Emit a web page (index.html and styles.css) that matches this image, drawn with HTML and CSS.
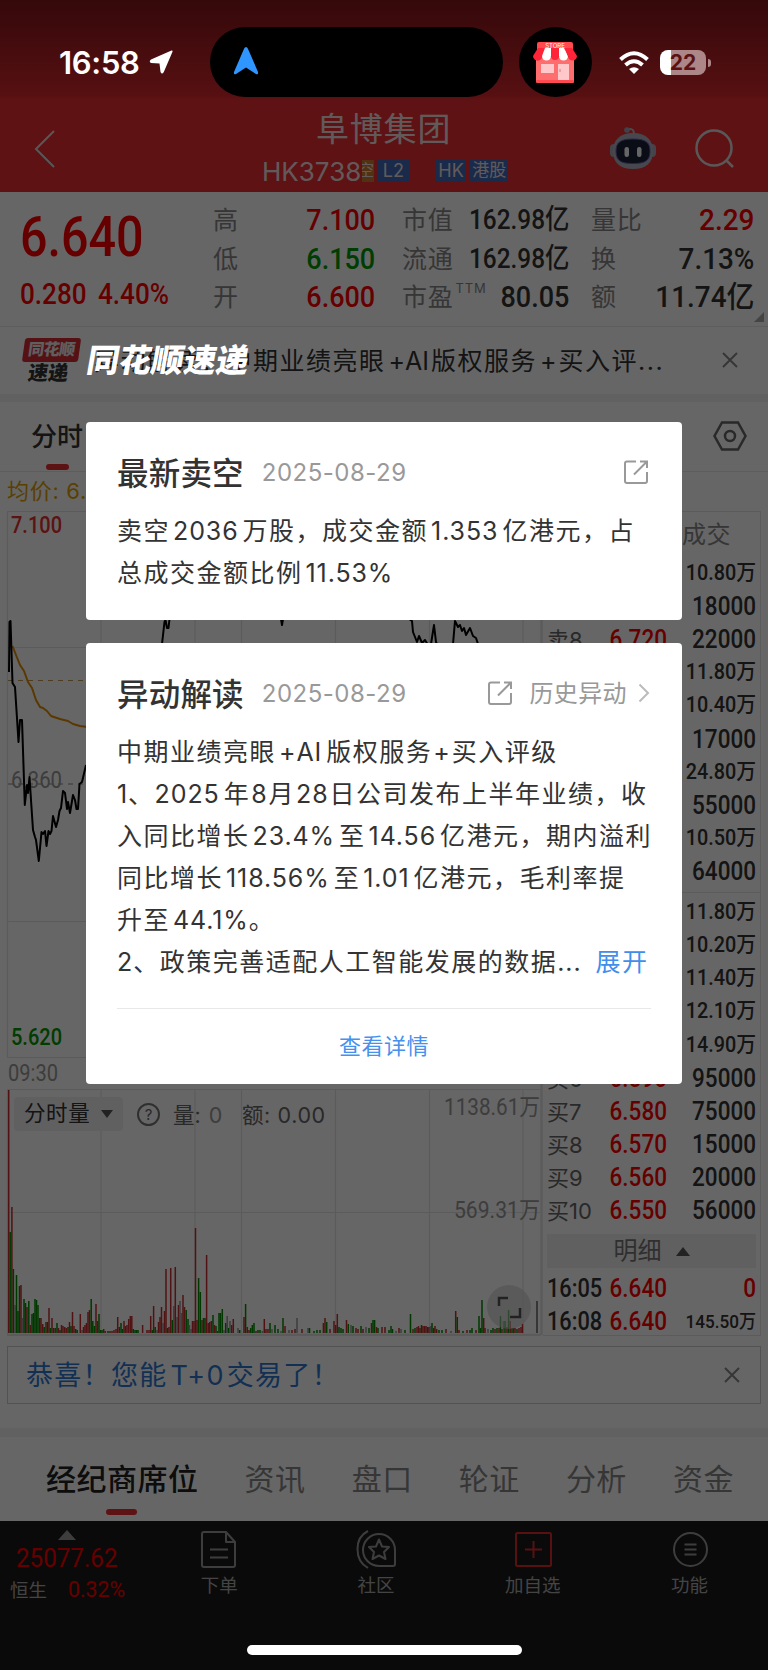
FILE: index.html
```html
<!DOCTYPE html>
<html lang="zh-CN">
<head>
  <meta charset="UTF-8" />
  <meta name="viewport" content="width=device-width, initial-scale=1.0" />
  <title>阜博集团 HK3738</title>
  <link rel="stylesheet" href="styles.css">
</head>
<body>
  <div class="page">
    <!-- Header -->
    <header class="header">
      <svg class="back" width="22" height="40" viewBox="0 0 22 40"><path d="M20 2 L2 20 L20 38"/></svg>
      <div class="stock">
        <h1>阜博集团</h1>
        <div class="code">
          <span class="code-no">HK3738</span>
          <span class="tag orange">空</span>
          <span class="tag">L2</span>
          <span class="tag hk">HK</span>
          <span class="tag wide">港股</span>
        </div>
      </div>
      <svg class="robot" width="48" height="44" viewBox="0 0 48 44">
        <path d="M25 8 C25 3 22 2.500 19 3.500" fill="none" stroke="#b8bcc8" stroke-width="2"/>
        <circle cx="18" cy="4" r="2.800" fill="#9fa6b8"/>
        <rect x="1" y="18" width="8" height="13" rx="4" fill="#a8acba"/>
        <rect x="39" y="18" width="8" height="13" rx="4" fill="#a8acba"/>
        <path d="M24 7 C37 7 44 14 44 25 C44 37 37 43 24 43 C11 43 4 37 4 25 C4 14 11 7 24 7Z" fill="#b0b3c0"/>
        <path d="M24 13 C36 13 41 16 41 25 C41 35 36 37.500 24 37.500 C12 37.500 7 35 7 25 C7 16 12 13 24 13Z" fill="#1b2238" stroke="#6d58b0" stroke-width="1"/>
        <rect x="15.500" y="21" width="4.500" height="10" rx="2.200" fill="#fff"/>
        <rect x="28" y="21" width="4.500" height="10" rx="2.200" fill="#fff"/>
      </svg>
      <svg class="search" width="42" height="42" viewBox="0 0 42 42"><circle cx="20" cy="20" r="17.500"/><path d="M32 32 L39 39"/></svg>
    </header>

    <!-- Quote -->
    <section class="quote">
      <div class="last">
        <div class="price din">6.640</div>
        <div class="change"><span class="din">0.280</span><span class="din">4.40%</span></div>
      </div>
      <dl class="figures col-a">
        <dt>高</dt><dd class="din up">7.100</dd>
        <dt>低</dt><dd class="din down">6.150</dd>
        <dt>开</dt><dd class="din up">6.600</dd>
      </dl>
      <dl class="figures col-b">
        <dt>市值</dt><dd class="din small">162.98亿</dd>
        <dt>流通</dt><dd class="din small">162.98亿</dd>
        <dt>市盈<sup>TTM</sup></dt><dd class="din">80.05</dd>
      </dl>
      <dl class="figures col-c">
        <dt>量比</dt><dd class="din up">2.29</dd>
        <dt>换</dt><dd class="din">7.13%</dd>
        <dt>额</dt><dd class="din">11.74亿</dd>
      </dl>
      <i class="corner"></i>
    </section>

    <!-- News strip -->
    <section class="strip">
      <div class="badge"><b>同花顺</b><em>速递</em></div>
      <p>异动解读：中期业绩亮眼<span class="plus">+AI</span>版权服务<span class="plus">+</span>买入评<span class="dots">...</span></p>
      <svg class="close" width="16" height="16" viewBox="0 0 16 16"><path d="M1 1 L15 15 M15 1 L1 15"/></svg>
    </section>

    <nav class="period">
      <span class="active">分时</span>
      <svg width="34" height="30" viewBox="0 0 34 30"><path d="M9 1.500 H25 L32.500 15 L25 28.500 H9 L1.500 15Z"/><circle cx="17" cy="15" r="5"/></svg>
    </nav>

    <!-- Charts + order book -->
    <section class="board">
      <div class="charts">
        <div class="avg">均价: 6.522</div>
        <svg id="chart" width="543" height="836" viewBox="0 500 543 836">
          <g class="grid">
            <path d="M7.500 1057.500 V511.500 H541 M7 647.500 H541 M7 921.500 H541 M7 1057.500 H541"/>
            <path d="M101 511 V1057 M195 511 V1057 M241.500 511 V1057 M335.500 511 V1057 M429.500 511 V1057 M523 511 V1057"/>
            <path d="M7.500 1334 V1089.500 H541 M7 1212.500 H541"/>
            <path d="M101 1089 V1335 M195 1089 V1335 M241.500 1089 V1335 M335.500 1089 V1335 M429.500 1089 V1335 M523 1089 V1335"/>
          </g>
          <path class="frame" d="M541.500 511 V1335 M7 1335 H541"/>
          <path class="dash gold" d="M8 680.500 H541"/>
          <path class="dash mid" d="M8 784 H541"/>
          <polyline class="avg-line" points="12.500,646 16,655 20,665 24,671 28,682 32,688 36,700 40,707 43,708 47,711 51,716 60,719 68,721 73,724 80,726 88,727"/>
          <text class="axis mid-text" x="11" y="788" textLength="51" lengthAdjust="spacingAndGlyphs">6.360</text>
          <polyline class="price-line" points="9,672 9.500,622 10.500,621 12.500,683 15,687 18.500,742 20,720 22,720 24.800,805 27,785 28,793 29.500,777 31,800 33,830 35,837 36,840 38.800,861 41.500,832 43,834 45,831 46.500,846 48.500,831 50,834 51.500,831 53,816 56,827 58,820 59.500,811 61,808 63,791 65,793 67,809 68,802 70,813 73,795 75,800 76.500,809 78,809 79.500,784 82,782 86,765"/>
          <polyline class="price-line" points="162,644 164.500,622 165.500,620 167,628 168.500,628 169.500,619"/>
          <path class="price-line" d="M281 619 L282 625 L283 619"/>
          <polyline class="price-line" points="409,619 412,621 413,632 417,642 419,636 422,643 425,640 428,645 431,644 434,625 436,642 438,646 453,644 455,621 458,627 460,625 462,631 464,628 466,635 470,628 473,636 476,638 478,644"/>
          <text class="axis up" x="11" y="533" textLength="51" lengthAdjust="spacingAndGlyphs">7.100</text>
          <text class="axis down" x="11" y="1045" textLength="51" lengthAdjust="spacingAndGlyphs">5.620</text>
          <text class="axis time" x="8" y="1081" textLength="50" lengthAdjust="spacingAndGlyphs">09:30</text>
          <text class="axis vol" x="540" y="1115" text-anchor="end" textLength="96" lengthAdjust="spacingAndGlyphs">1138.61万</text>
          <text class="axis vol" x="540" y="1218" text-anchor="end" textLength="86" lengthAdjust="spacingAndGlyphs">569.31万</text>
          <g id="volume"></g>
          <rect x="536" y="1301" width="2" height="32" fill="#888"/>
          <circle cx="509" cy="1307" r="22" fill="#cfcfcf" fill-opacity=".6"/>
          <path class="expand" d="M499 1306 V1298 H508 M520 1308 V1317 H510"/>
        </svg>
        <div class="vol-legend">
          <span class="pill">分时量<i></i></span>
          <span class="help">?</span>
          <span class="v">量: <s>0</s></span>
          <span class="a">额: <b>0.00</b></span>
        </div>
      </div>

      <div class="book">
        <div class="book-head">成交</div>
        <div class="rows" id="asks"></div>
        <div class="rows bids" id="bids"></div>
        <div class="detail">明细<i></i></div>
        <div class="trade"><span class="din">16:05</span><span class="din up">6.640</span><span class="din up">0</span></div>
        <div class="trade"><span class="din">16:08</span><span class="din up">6.640</span><span class="din wan">145.50万</span></div>
      </div>
    </section>

    <div class="promo">
      <span>恭喜！您能<i>T+0</i>交易了！</span>
      <svg class="close" width="16" height="16" viewBox="0 0 16 16"><path d="M1 1 L15 15 M15 1 L1 15"/></svg>
    </div>

    <nav class="tabs">
      <span class="active">经纪商席位</span>
      <span>资讯</span><span>盘口</span><span>轮证</span><span>分析</span><span>资金</span>
    </nav>

    <!-- Bottom bar -->
    <footer class="bottom">
      <div class="index">
        <i></i>
        <div class="din up">25077.62</div>
        <p><span>恒生</span><span class="din up">0.32%</span></p>
      </div>
      <div class="item">
        <svg width="40" height="40" viewBox="0 0 40 40"><path d="M5 3 H27 L36 13 V36 Q36 38 34 38 H5 Q3 38 3 36 V5 Q3 3 5 3Z M27 3 V13 H36 M11 20.500 H29 M11 28.500 H29"/></svg>
        下单
      </div>
      <div class="item">
        <svg width="40" height="40" viewBox="0 0 40 40"><path d="M12 2 C-2 9 -2 31 12 39 M39 21 A16 16 0 1 0 23 37 H37 Q39 37 39 35Z"/><path d="M23 10.500 L26 17.500 L33 18 L28 23 L29.500 30 L23 26.500 L16.500 30 L18 23 L13 18 L20 17.500Z"/></svg>
        社区
      </div>
      <div class="item">
        <svg class="red" width="40" height="40" viewBox="0 0 40 40"><rect x="3" y="4" width="35" height="33" rx="1.500"/><path d="M20.500 12 V29 M12 20.500 H29"/></svg>
        加自选
      </div>
      <div class="item">
        <svg width="40" height="40" viewBox="0 0 40 40"><circle cx="20.500" cy="20.500" r="16.500"/><path d="M14.500 15.500 H26.500 M14.500 20.500 H26.500 M14.500 25.500 H26.500"/></svg>
        功能
      </div>
    </footer>
  </div>

  <!-- Popup -->
  <div class="mask">
    <h2 class="mask-title">同花顺速递</h2>
    <article class="card">
      <div class="card-head">
        <h3>最新卖空</h3><time>2025-08-29</time>
        <svg class="share" width="26" height="26" viewBox="0 0 26 26"><path d="M13 2.500 H4 Q2 2.500 2 4.500 V22 Q2 24 4 24 H22 Q24 24 24 22 V13 M17 2.500 H24 V9 M24 2.500 L11 15.500"/></svg>
      </div>
      <div class="card-body">
        <p>卖空<i>2036</i>万股，成交金额<i>1.353</i>亿港元，占</p>
        <p>总成交金额比例<i>11.53%</i></p>
      </div>
    </article>
    <article class="card second">
      <div class="card-head">
        <h3>异动解读</h3><time>2025-08-29</time>
        <svg class="share" width="26" height="26" viewBox="0 0 26 26"><path d="M13 2.500 H4 Q2 2.500 2 4.500 V22 Q2 24 4 24 H22 Q24 24 24 22 V13 M17 2.500 H24 V9 M24 2.500 L11 15.500"/></svg>
        <span class="history">历史异动</span>
        <svg class="arrow" width="12" height="20" viewBox="0 0 12 20"><path d="M1.500 1.500 L10 10 L1.500 18.500"/></svg>
      </div>
      <div class="card-body">
        <p>中期业绩亮眼<i>+AI</i>版权服务<i class="tight">+</i>买入评级</p>
        <p><i class="first">1</i>、<i class="flush">2025</i>年<i class="tight">8</i>月<i class="tight">28</i>日公司发布上半年业绩，收</p>
        <p>入同比增长<i>23.4%</i>至<i>14.56</i>亿港元，期内溢利</p>
        <p>同比增长<i>118.56%</i>至<i>1.01</i>亿港元，毛利率提</p>
        <p>升至<i class="end">44.1%</i>。</p>
        <p><i class="first">2</i>、政策完善适配人工智能发展的数据<i class="flush">...</i><a>展开</a></p>
      </div>
      <div class="more">查看详情</div>
    </article>
  </div>

  <!-- System status bar -->
  <div class="status">
    <span class="clock">16:58</span>
    <svg class="loc" width="24" height="24" viewBox="0 0 24 24"><path d="M22.500 .5 L2 9.500 Q-.5 11.500 2 13 L10.500 13.500 L11.500 22 Q13 25 14.800 22 L23.500 1.800 Q23.800 0 22.500 .5Z" fill="#fff"/></svg>
    <div class="island"><svg width="26" height="28" viewBox="0 0 26 28"><path d="M13 0 Q14.500 0 15.500 3 L25 25 Q25.500 28 23 27 L13 20.500 L3 27 Q.500 28 1 25 L10.500 3 Q11.500 0 13 0Z" fill="#3096ff"/></svg></div>
    <div class="store">
      <svg width="46" height="44" viewBox="0 0 46 44">
        <rect x="5" y="1" width="36" height="10" rx="2" fill="#ff4b50"/>
        <text x="23" y="7" text-anchor="middle">STORE</text>
        <rect x="4" y="16" width="38" height="25" fill="#ff6e6e"/>
        <rect x="4" y="39" width="38" height="3" rx="1" fill="#ff4b50"/>
        <path d="M6 7 H15 L10.500 15 A4.500 4.500 0 0 1 1 15Z" fill="#ff2438"/>
        <path d="M13 7 H19 V15 A4.500 4.500 0 0 1 10 15Z" fill="#fff"/>
        <path d="M19 7 H27 V15 A4 4 0 0 1 19 15Z" fill="#ff2438"/>
        <path d="M27 7 H33 L36 15 A4.500 4.500 0 0 1 27 15Z" fill="#fff"/>
        <path d="M32 7 H40 L45 15 A4.500 4.500 0 0 1 36 15Z" fill="#ff2438"/>
        <rect x="9" y="23" width="13" height="9" fill="#ffc9cb"/>
        <rect x="26" y="23" width="11" height="16" fill="#ffc9cb"/>
        <path d="M28 28 V31" stroke="#ff6e6e"/>
      </svg>
    </div>
    <svg class="wifi" width="30" height="23" viewBox="0 0 30 23" fill="none" stroke="#fff" stroke-width="4">
      <path d="M1.500 8.500 Q15 -4 28.500 8.500 M6.500 14 Q15 6.500 23.500 14"/><path d="M10 18 Q15 14.500 20 18 L15 23Z" fill="#fff" stroke="none"/>
    </svg>
    <div class="battery"><b>22</b></div>
  </div>
  <div class="home-bar"></div>

  <script>
    const sizes = {
      asks: ["10.80万", "18000", "22000", "11.80万", "10.40万", "17000", "24.80万", "55000", "10.50万", "64000"],
      bids: ["11.80万", "10.20万", "11.40万", "12.10万", "14.90万", "95000", "75000", "15000", "20000", "56000"]
    };

    function fillRows(id, name, level, price) {
      document.getElementById(id).innerHTML = sizes[id].map((size, i) => {
        const wan = size.endsWith("万") ? " wan" : "";
        return `<div class="row"><span>${name}${level(i)}</span>` +
          `<span class="din up">${price(i).toFixed(3)}</span>` +
          `<span class="din${wan}">${size}</span></div>`;
      }).join("");
    }
    fillRows("asks", "卖", i => 10 - i, i => 6.74 - i * 0.01);
    fillRows("bids", "买", i => i + 1, i => 6.64 - i * 0.01);

    // x, height, r = up / g = down / n = flat
    const bars = `8.7 243 r,10.2 101 g,11.9 126 r,13.4 64 g,15 28 n,16.500 58 g,18 22 g,19.500 47 g,21 48 r,22.500 15 n,24 34 g,25.500 30 g,27 26 r,28.800 32 g,30.300 8 r,32 19 g,33.500 20 g,35 34 g,36.500 33 g,38 28 g,39.700 15 g,41 15 r,42.700 9 r,44.200 6 g,46 11 r,47.500 11 g,49 25 r,50.500 5 g,52 15 r,53.700 5 g,55.300 5 r,57 10 g,58.500 5 r,60 3 g,61.500 8 r,63 7 r,64.700 6 r,66.200 5 r,68 6 g,69.500 11 r,71 7 g,72.500 21 r,74 7 r,75.700 4 g,77.200 3 g,80.300 19 r,82 3 n,83.500 6 r,85 8 r,86.500 10 r,88 21 r,89.500 23 r,91.200 34 g,92.800 12 g,94.400 7 g,96 29 r,97.500 12 r,99 19 g,100.500 3 g,102 3 g,103.700 4 r,105.200 2 r,108 2 g,110 2 r,112 2 r,114 3 r,116 4 r,117.700 16 r,119.300 6 r,121 10 g,122.500 4 g,124 12 r,125.500 7 r,127 8 r,128.700 14 r,130.300 17 r,131.800 17 r,133.300 4 g,135 3 g,136.500 3 g,138 3 g,142.600 8 r,147 3 r,149 3 r,150.700 17 r,152.300 3 g,153.600 27 r,155.200 6 g,157 3 n,158.500 11 r,160 16 r,161.500 26 r,163 10 n,164.500 22 r,166 64 r,167.500 5 g,169 6 r,170.700 65 r,172.300 13 g,173.800 27 n,175.300 66 r,177 16 n,178.500 28 r,180 32 n,181.500 20 n,183 38 r,184.500 26 r,186.200 23 g,188 14 g,189.500 8 n,191 4 n,192.500 12 r,194 12 r,195.500 105 r,197 13 r,198.600 55 g,200.300 41 g,202 13 r,203.500 15 g,205 15 g,206.600 78 r,208.200 10 r,209.700 11 r,211.300 12 r,213 18 g,214.500 8 r,216 7 g,217.500 2 r,219 20 g,220.500 20 g,222.300 24 g,224 3 n,225.700 10 g,227.200 17 n,228.700 5 g,230 12 n,231.700 8 r,233.300 14 r,238 5 n,239.700 3 g,244 16 r,245.600 29 g,247.300 6 r,249 3 r,250.700 5 g,252.300 8 g,254 10 g,256 2 r,258 3 g,260 3 g,262.300 2 n,264.300 14 r,266 4 r,268 4 r,270 10 g,272 4 n,275 8 g,278 4 g,281 2 n,283 15 g,285 7 r,289 3 n,292 3 r,295 4 r,297 15 n,302 4 r,308 5 n,309.500 5 g,314 2 g,317 3 g,320 3 g,323.400 10 r,325 15 r,326.700 11 g,330 4 r,334 12 r,335.700 8 r,337.300 19 r,339 6 g,341 5 g,343 4 g,346.500 13 r,348.300 9 g,351 8 n,353 7 g,356 5 r,358 4 r,361 7 g,363 4 r,366 6 n,369 5 g,371.500 10 r,373 13 g,374.600 13 g,376.500 6 r,378 5 g,382 6 r,385 6 r,389 3 g,391 7 g,392.500 4 g,396 2 n,399 5 r,401 4 n,405 3 g,410.500 19 g,413 4 r,415 5 g,417 6 r,418.500 7 r,420 5 r,421.500 8 g,423 7 r,424.600 7 r,426 7 r,427.600 6 g,429 6 r,430.700 7 n,432 10 g,433.700 5 g,435 7 r,436.700 4 r,439 3 g,442 3 g,446 4 r,451 2 n,455.700 22 r,457.300 16 g,459 3 r,463 2 g,467 3 r,470 3 g,472 5 g,476 3 r,479 17 g,480.600 5 g,482 33 g,483.700 15 r,485 5 r,488 4 n,491 3 g,493 5 g,495 4 r,497 5 g,499 5 r,500.500 17 g,502 4 r,503.500 12 n,505 12 g,507 6 r,508.600 23 g,510.200 12 r,512 5 g,513.600 5 r,515 5 r,517 4 g,519 5 r,521 6 r,522.500 9 r`;
    const colors = { r: "#c92f2f", g: "#008c00", n: "#999" };
    document.getElementById("volume").innerHTML = bars.split(",").map(b => {
      const [x, h, c] = b.split(" ");
      return `<rect x="${x - 0.75}" y="${1333 - h}" width="1.500" height="${h}" fill="${colors[c]}"/>`;
    }).join("");
  </script>
</body>
</html>
```
FILE: styles.css
```css
* {
  box-sizing: border-box;
  margin: 0;
  padding: 0;
}
body {
  position: relative;
  width: 768px;
  height: 1670px;
  overflow: hidden;
  background: #fff;
  color: #333;
  font-family: Inter, "Noto Sans CJK SC", sans-serif;
}
i, em {
  font-style: normal;
}
.page {
  height: 1670px;
  display: flex;
  flex-direction: column;
}
.din {
  display: inline-block;
  font-family: Roboto, "Noto Sans CJK SC", sans-serif;
  font-weight: 500;
  white-space: nowrap;
  transform: scaleX(.9);
  transform-origin: right center;
}
.up { color: #ff0000; fill: #e63030; }
.down { color: #009900; fill: #009900; }

/* Header */
.header {
  height: 192px;
  flex: none;
  padding: 108px 32px 0 34px;
  display: flex;
  align-items: flex-start;
  background: linear-gradient(#84161b 0, #d8282d 95px, #eb2d32 100px);
}
.back {
  margin-top: 21px;
}
.back path, .search circle, .search path {
  fill: none;
  stroke: #ddd;
  stroke-width: 2;
}
.stock {
  margin-left: 206px;
  width: 250px;
  color: #f5f5f5;
}
.stock h1 {
  height: 43px;
  padding-left: 54px;
  font-size: 33px;
  line-height: 43px;
  font-weight: 400;
  letter-spacing: .8px;
  opacity: .9;
}
.code {
  display: flex;
  align-items: center;
  height: 40px;
  opacity: .9;
}
.code-no {
  width: 101px;
  font-size: 26px;
  letter-spacing: 0;
}
.tag {
  height: 22px;
  width: 31px;
  margin-right: 4px;
  background: #2e70c8;
  font-size: 18px;
  line-height: 21px;
  text-align: center;
  white-space: nowrap;
  overflow: hidden;
}
.tag.orange {
  width: 12px;
  background: #c8852e;
  direction: rtl;
  font-size: 16px;
}
.tag.hk { margin-left: 23px; }
.tag.wide { width: 38px; font-size: 17px; }
.robot {
  margin: 18px 0 0 97px;
}
.search {
  margin: 20px 0 0 auto;
}
.search circle, .search path {
  stroke-width: 2.5;
}

/* Quote */
.quote {
  position: relative;
  height: 135px;
  flex: none;
  display: flex;
  border-bottom: 1px solid #e8e8e8;
}
.last {
  width: 214px;
  padding: 15px 0 0 20px;
  color: #ff0000;
}
.last .din {
  transform-origin: left center;
}
.price {
  font-size: 56px;
  line-height: 60px;
  transform: scaleX(.865) !important;
}
.change {
  padding-top: 8px;
  display: flex;
  font-size: 29px;
  line-height: 38px;
}
.change .din {
  width: 78px;
  transform: scaleX(.9);
}
.figures {
  display: grid;
  grid-template-columns: auto 1fr;
  grid-auto-rows: 38.500px;
  padding-top: 9px;
}
.figures dt {
  font-size: 25px;
  line-height: 38px;
  color: #888;
  letter-spacing: .8px;
  white-space: nowrap;
}
.figures dd {
  text-align: right;
  font-size: 30px;
  line-height: 38px;
}
.figures dd.small {
  font-size: 28px;
  transform: scaleX(.87);
}
.figures sup {
  position: absolute;
  font-size: 13px;
  line-height: 14px;
  margin: 3px 0 0 2px;
}
.col-a { width: 162px; margin-left: -1px; }
.col-b { width: 159px; margin-left: 27px; }
.col-c { width: 163px; margin-left: 30px; }
.col-c .din { transform: scaleX(.93); }
.corner {
  position: absolute;
  right: 4px;
  bottom: 4px;
  border: 5px solid transparent;
  border-right-color: #aaa;
  border-bottom-color: #aaa;
}

/* News strip */
.strip {
  height: 67px;
  flex: none;
  padding: 0 30px 0 24px;
  display: flex;
  align-items: center;
}
.badge {
  width: 56px;
  height: 46px;
  transform: skewX(-8deg);
  margin-left: -2px;
  text-align: center;
}
.badge b {
  display: block;
  height: 24px;
  border-radius: 3px;
  background: #d82c35;
  color: #eee;
  font-size: 16px;
  font-weight: 900;
  line-height: 23px;
  letter-spacing: -.5px;
}
.badge em {
  display: block;
  font-size: 20px;
  font-weight: 900;
  line-height: 23px;
}
.strip p {
  margin: -4px 0 0 16px;
  font-size: 25px;
  letter-spacing: 1.5px;
  white-space: nowrap;
}
.plus {
  margin: 0 2px 0 3px;
  letter-spacing: 0;
}
.strip .close {
  margin-top: -1px;
}
.close {
  margin-left: auto;
}
.close path {
  stroke: #888;
  stroke-width: 2;
}

/* Period tabs */
.period {
  height: 78px;
  flex: none;
  border-top: 8px solid #f2f2f2;
  border-bottom: 1px solid #e8e8e8;
  padding: 0 21px 0 31px;
  display: flex;
  justify-content: space-between;
  align-items: flex-start;
}
.period svg {
  margin-top: 19px;
}
.period svg * {
  fill: none;
  stroke: #666;
  stroke-width: 2.5;
}
.period .active {
  position: relative;
  height: 68px;
  font-size: 26px;
  font-weight: 500;
  line-height: 70px;
}
.active::after {
  content: "";
  position: absolute;
  left: 50%;
  bottom: 0;
  width: 23px;
  height: 6px;
  margin-left: -11px;
  border-radius: 3px;
  background: #e93030;
}

/* Charts */
.board {
  height: 864px;
  flex: none;
  display: flex;
}
.charts {
  position: relative;
  width: 543px;
}
.avg {
  height: 28px;
  padding-left: 7px;
  font-size: 22px;
  line-height: 39px;
  letter-spacing: .7px;
  color: #e0a000;
}
#chart {
  display: block;
}
.grid path, .frame, .dash {
  fill: none;
  stroke: #e4e4e4;
  stroke-width: 1.2;
}
.frame {
  stroke-width: 2.5;
}
.dash {
  stroke: #c49a52;
  stroke-dasharray: 5 5;
}
.dash.mid {
  stroke: #888;
}
.avg-line, .price-line {
  fill: none;
  stroke: #000;
  stroke-width: 2;
  stroke-linejoin: round;
}
.avg-line {
  stroke: #e08c00;
}
.axis {
  font-family: Roboto, "Noto Sans CJK SC", sans-serif;
  font-size: 23px;
  font-weight: 500;
}
.mid-text, .time, .vol {
  fill: #999;
  font-weight: 400;
}
.expand {
  fill: none;
  stroke: #555;
  stroke-width: 2.5;
}
.vol-legend {
  position: absolute;
  left: 14px;
  top: 625px;
  display: flex;
  align-items: center;
  height: 34px;
  font-size: 21.500px;
  color: #666;
  white-space: nowrap;
}
.pill {
  width: 109px;
  height: 34px;
  padding-left: 10px;
  border-radius: 4px;
  background: #f1f1f1;
  color: #333;
  line-height: 33px;
  letter-spacing: .6px;
}
.pill i, .detail i {
  display: inline-block;
  margin-left: 11px;
  vertical-align: 3px;
  border: 6px solid transparent;
  border-top: 8px solid #555;
  border-bottom: 0;
}
.help {
  width: 23px;
  height: 23px;
  margin-left: 14px;
  border: 2px solid #777;
  border-radius: 50%;
  font-size: 15px;
  line-height: 19px;
  text-align: center;
}
.v { margin: -2px 0 0 13px; width: 69px; }
.v s { text-decoration: none; color: #999; margin-left: 2px; }
.a { margin-top: -2px; letter-spacing: .6px; }
.a b { font-weight: 400; }

/* Order book */
.book {
  width: 218px;
  height: 825px;
  margin-top: 39px;
  padding: 0 4px;
  border: solid #e4e4e4;
  border-width: 1px 1px 1px 0;
  flex: none;
}
.book-head {
  height: 44px;
  padding-right: 25px;
  text-align: right;
  font-size: 24px;
  line-height: 45px;
  letter-spacing: .5px;
  color: #888;
}
.row, .trade {
  display: grid;
  grid-template-columns: 54px 66px 89px;
  height: 33.120px;
  line-height: 36px;
  font-size: 25px;
  text-align: right;
  white-space: nowrap;
}
.row span:first-child {
  text-align: left;
  font-size: 22px;
  line-height: 37px;
  color: #666;
}
.row .wan {
  font-size: 22px;
  line-height: 33px;
}
.bids {
  margin: 5px -4px 0;
  padding: 2px 4px 0;
  border-top: 1px solid #e4e4e4;
}
.detail {
  height: 34px;
  margin: 8px 0 3px;
  background: #f0f0f0;
  color: #777;
  font-size: 24px;
  line-height: 33px;
  text-align: center;
}
.detail i {
  margin-left: 14px;
  border: 7px solid transparent;
  border-top: 0;
  border-bottom: 9px solid #555;
}
.trade {
  line-height: 35px;
}
.trade span:first-child {
  transform: scaleX(.87);
  transform-origin: left center;
  text-align: left;
}
.trade .wan {
  font-size: 19px;
}

/* Promo */
.promo {
  height: 58px;
  flex: none;
  margin: 10px 7px 24px;
  padding: 0 20px 0 18px;
  border: 1px solid #ccc;
  display: flex;
  align-items: center;
  color: #2f78d2;
  font-size: 27px;
  letter-spacing: 1.3px;
}
.promo span {
  margin-top: -3px;
}
.promo i {
  margin: 0 2px 0 3px;
}

/* Section tabs */
.tabs {
  height: 93px;
  flex: none;
  padding: 0 34px 0 46px;
  border-top: 9px solid #f2f2f2;
  display: flex;
  justify-content: space-between;
  font-size: 30px;
  line-height: 84px;
  letter-spacing: .5px;
  color: #888;
  white-space: nowrap;
}
.tabs .active {
  position: relative;
  height: 78px;
  font-weight: 500;
  color: #222;
}
.tabs .active::after {
  width: 31px;
  margin-left: -16px;
}

/* Bottom bar */
.bottom {
  flex: 1;
  background: #1a1a1a;
  display: flex;
  color: #aaa;
  font-size: 18.500px;
}
.index {
  width: 141px;
  padding-top: 9px;
}
.index > i {
  display: block;
  width: 18px;
  margin-left: 58px;
  border: 9px solid transparent;
  border-top: 0;
  border-bottom: 10px solid #999;
}
.index > .din {
  margin-left: 16px;
  font-size: 26px;
  line-height: 37px;
  font-weight: 400;
  transform: scaleX(.93);
  transform-origin: left;
}
.index p {
  display: flex;
  padding-left: 10px;
  line-height: 27px;
}
.index p .din {
  margin-left: 21px;
  font-size: 22px;
  line-height: 25px;
  font-weight: 400;
  transform: scaleX(.97);
  transform-origin: left;
}
.item {
  width: 157px;
  padding-top: 8px;
  display: flex;
  flex-direction: column;
  align-items: center;
  line-height: 33px;
}
.item svg {
  fill: none;
  stroke: #999;
  stroke-width: 2;
  stroke-linejoin: round;
}
.item .red {
  stroke: #dd2c2c;
}

/* Popup */
.mask {
  position: absolute;
  inset: 0;
  background: rgba(0, 0, 0, .6);
  padding: 340px 86px 0;
}
.mask-title {
  height: 82px;
  margin-left: 1px;
  color: #fff;
  font-size: 32.300px;
  line-height: 42px;
  font-weight: 900;
  transform: skewX(-10deg);
  transform-origin: left 22px;
}
.card {
  height: 198px;
  padding: 28px 31px 0;
  border-radius: 4px;
  background: #fff;
}
.card.second {
  height: 441px;
  margin-top: 23px;
}
.card-head {
  display: flex;
  align-items: center;
  height: 44px;
}
.card-head h3 {
  margin-top: -3px;
  font-size: 31.500px;
  font-weight: 500;
  letter-spacing: .2px;
}
.card-head time {
  margin-left: 18px;
  font-size: 24px;
  letter-spacing: .5px;
  color: #999;
}
.share {
  margin-left: auto;
}
.card:not(.second) .share {
  margin-right: 2px;
}
.share path, .arrow path {
  fill: none;
  stroke: #999;
  stroke-width: 2;
}
.history {
  margin: -3px 0 0 16px;
  font-size: 24px;
  letter-spacing: .4px;
  color: #999;
}
.arrow {
  margin: 0 1px 0 11px;
}
.arrow path {
  stroke: #bbb;
}
.card-body {
  padding-top: 16px;
  font-size: 25px;
  line-height: 42px;
  letter-spacing: 1.5px;
  white-space: nowrap;
}
.card-body p {
  height: 42px;
}
.card-body i {
  margin: 0 4px 0 3px;
  letter-spacing: .9px;
}
.card-body .tight {
  margin: 0 1px;
}
.card-body .first {
  margin: 0;
}
.card-body .flush {
  margin-left: 0;
}
.card-body .end {
  margin-right: 0;
}
.card-body a {
  margin-left: 10px;
  color: #3f8eec;
}
.more {
  height: 74px;
  margin-top: 25px;
  border-top: 1px solid #e8e8e8;
  text-align: center;
  font-size: 22px;
  letter-spacing: .5px;
  line-height: 74px;
  color: #4691ee;
}

/* Status bar */
.status {
  position: absolute;
  left: 0;
  top: 27px;
  width: 768px;
  height: 70px;
  display: flex;
  align-items: center;
  color: #fff;
}
.clock {
  width: 90px;
  margin-left: 59px;
  font-size: 31px;
  font-weight: 600;
  letter-spacing: -.3px;
}
.island {
  width: 293px;
  height: 70px;
  margin-left: 37px;
  border-radius: 35px;
  background: #000;
  padding: 20px 0 0 23px;
}
.store {
  width: 73px;
  height: 70px;
  margin-left: 16px;
  border-radius: 50%;
  background: #000;
  padding: 14px 0 0 13px;
}
.store text {
  font-size: 6px;
  fill: #fff;
}
.wifi {
  margin-left: 27px;
}
.battery {
  position: relative;
  width: 46px;
  height: 25px;
  margin-left: 11px;
  border-radius: 8px;
  background: linear-gradient(90deg, #fff 24%, #ad8688 24%);
  color: #5a1214;
  font-size: 21px;
  line-height: 25px;
  text-align: center;
}
.battery b {
  font-weight: 700;
}
.battery::after {
  content: "";
  position: absolute;
  right: -5px;
  top: 9px;
  width: 3px;
  height: 8px;
  border-radius: 0 3px 3px 0;
  background: #ad8688;
}
.home-bar {
  position: absolute;
  left: 247px;
  top: 1645px;
  width: 275px;
  height: 10px;
  border-radius: 5px;
  background: #fff;
}
```
